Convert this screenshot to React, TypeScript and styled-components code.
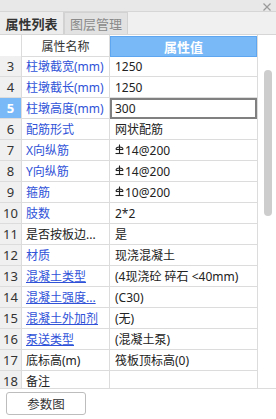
import React from 'react';
import styled, { createGlobalStyle } from 'styled-components';

const GlobalStyle = createGlobalStyle`
	html, body {
		margin: 0;
		padding: 0;
		background: #ffffff;
	}
	body {
		font-family: 'Noto Sans', 'Noto Sans CJK SC', sans-serif;
		font-size: 12px;
		color: #222222;
	}
`;

type Row = {
	no: number;
	name: string;
	value: string;
	link?: boolean;
	plain?: boolean;
	rebar?: boolean;
	selected?: boolean;
};

const rows: Row[] = [
	{ no: 3, name: '柱墩截宽(mm)', value: '1250' },
	{ no: 4, name: '柱墩截长(mm)', value: '1250' },
	{ no: 5, name: '柱墩高度(mm)', value: '300', selected: true },
	{ no: 6, name: '配筋形式', value: '网状配筋' },
	{ no: 7, name: 'X向纵筋', value: '14@200', rebar: true },
	{ no: 8, name: 'Y向纵筋', value: '14@200', rebar: true },
	{ no: 9, name: '箍筋', value: '10@200', rebar: true },
	{ no: 10, name: '肢数', value: '2*2' },
	{ no: 11, name: '是否按板边...', value: '是', plain: true },
	{ no: 12, name: '材质', value: '现浇混凝土' },
	{ no: 13, name: '混凝土类型', value: '(4现浇砼 碎石 <40mm)', link: true },
	{ no: 14, name: '混凝土强度...', value: '(C30)', link: true },
	{ no: 15, name: '混凝土外加剂', value: '(无)', link: true },
	{ no: 16, name: '泵送类型', value: '(混凝土泵)', link: true },
	{ no: 17, name: '底标高(m)', value: '筏板顶标高(0)', plain: true },
	{ no: 18, name: '备注', value: '', plain: true },
];

// steel grade mark shown before rebar specs
const RebarIcon = () => (
	<svg width='9' height='11' viewBox='0 0 9 11' style={{ marginRight: 1, marginBottom: 1 }}>
		<path d='M1 5.5 C1 2.2 8 2.2 8 5.5' fill='none' stroke='#222' strokeWidth='1.1' />
		<line x1='1' y1='5.5' x2='8' y2='5.5' stroke='#222' strokeWidth='1.1' />
		<line x1='4.5' y1='0.5' x2='4.5' y2='9.5' stroke='#222' strokeWidth='1.1' />
		<line x1='0.5' y1='9.5' x2='8.5' y2='9.5' stroke='#222' strokeWidth='1.1' />
	</svg>
);

const CloseIcon = () => (
	<svg width='8' height='8' viewBox='0 0 8 8'>
		<line x1='0.5' y1='0.5' x2='7.5' y2='7.5' stroke='#9a9a9a' strokeWidth='1.3' />
		<line x1='7.5' y1='0.5' x2='0.5' y2='7.5' stroke='#9a9a9a' strokeWidth='1.3' />
	</svg>
);

const App: React.FC = () => {
	return (
		<>
			<GlobalStyle />
			<Panel>
				<TitleStrip>
					<CloseIcon />
				</TitleStrip>
				<TabBar>
					<Tab $active>属性列表</Tab>
					<Tab>图层管理</Tab>
				</TabBar>
				<GridArea>
					<TableSide>
						<HeaderRow>
							<NoHead />
							<NameHead>属性名称</NameHead>
							<ValueHead>属性值</ValueHead>
						</HeaderRow>
						<Body>
							{rows.map((r) => (
								<DataRow key={r.no}>
									<NoCell $selected={r.selected}>{r.no}</NoCell>
									<NameCell $plain={r.plain} $link={r.link}>
										{r.name}
									</NameCell>
									<ValueCell $selected={r.selected}>
										{r.rebar && <RebarIcon />}
										{r.value}
									</ValueCell>
								</DataRow>
							))}
						</Body>
					</TableSide>
					<ScrollTrack>
						<ScrollThumb />
					</ScrollTrack>
				</GridArea>
				<Footer>
					<FooterButton type='button'>参数图</FooterButton>
				</Footer>
			</Panel>
		</>
	);
};

const Panel = styled.div`
	width: 276px;
	height: 419px;
	display: flex;
	flex-direction: column;
	background: #ffffff;
	overflow: hidden;
`;

const TitleStrip = styled.div`
	height: 11px;
	background: #e8e8e8;
	border-bottom: 1px solid #d6d6d6;
	display: flex;
	justify-content: flex-end;
	align-items: center;
	padding-right: 5px;
	padding-top: 2px;
	box-sizing: border-box;
	height: 12px;
`;

const TabBar = styled.div`
	height: 22px;
	display: flex;
	background: #f0f0f0;
	border-bottom: 1px solid #d6d6d6;
`;

const Tab = styled.div<{ $active?: boolean }>`
	width: 64px;
	display: flex;
	align-items: center;
	justify-content: center;
	font-size: 13px;
	font-weight: ${(p) => (p.$active ? 700 : 400)};
	color: ${(p) => (p.$active ? '#333333' : '#8a8a8a')};
	background: ${(p) => (p.$active ? '#ececec' : '#e2e2e2')};
	border-right: 1px solid #d2d2d2;
	border-left: ${(p) => (p.$active ? 'none' : '1px solid #d2d2d2')};
	border-top: ${(p) => (p.$active ? 'none' : '1px solid #d2d2d2')};
	box-sizing: border-box;
`;

const GridArea = styled.div`
	display: flex;
	height: 353px;
	border-bottom: 1px solid #dcdcdc;
`;

const TableSide = styled.div`
	width: 258px;
	display: flex;
	flex-direction: column;
	border-right: 1px solid #dcdcdc;
	box-sizing: border-box;
`;

const HeaderRow = styled.div`
	height: 21px;
	display: grid;
	grid-template-columns: 22px 88px 1fr;
	flex-shrink: 0;
`;

const NoHead = styled.div`
	background: #ffffff;
	border-right: 1px solid #dcdcdc;
	border-bottom: 1px solid #dcdcdc;
`;

const NameHead = styled.div`
	display: flex;
	align-items: center;
	justify-content: center;
	color: #333333;
	border-right: 1px solid #dcdcdc;
	border-bottom: 1px solid #dcdcdc;
`;

const ValueHead = styled.div`
	display: flex;
	align-items: center;
	justify-content: center;
	background: #7ab9f7;
	border: 1px solid #5ea6ef;
	color: #ffffff;
	font-weight: 700;
	font-size: 13px;
	box-sizing: border-box;
	margin-top: 1px;
`;

const Body = styled.div`
	flex: 1;
	overflow: hidden;
`;

const DataRow = styled.div`
	height: 21px;
	display: grid;
	grid-template-columns: 22px 88px 1fr;
	border-bottom: 1px solid #dcdcdc;
	box-sizing: border-box;
`;

const NoCell = styled.div<{ $selected?: boolean }>`
	display: flex;
	align-items: center;
	justify-content: center;
	font-size: 13px;
	background: ${(p) => (p.$selected ? '#7ab9f7' : '#f0f0f0')};
	color: ${(p) => (p.$selected ? '#ffffff' : '#333333')};
	font-weight: ${(p) => (p.$selected ? 700 : 400)};
	border-right: 1px solid #dcdcdc;
`;

const NameCell = styled.div<{ $plain?: boolean; $link?: boolean }>`
	display: flex;
	align-items: center;
	padding-left: 4px;
	white-space: nowrap;
	overflow: hidden;
	color: ${(p) => (p.$plain ? '#222222' : '#2f52d8')};
	text-decoration: ${(p) => (p.$link ? 'underline' : 'none')};
	border-right: 1px solid #dcdcdc;
`;

const ValueCell = styled.div<{ $selected?: boolean }>`
	display: flex;
	align-items: center;
	padding-left: ${(p) => (p.$selected ? '3px' : '5px')};
	white-space: nowrap;
	overflow: hidden;
	color: #222222;
	box-sizing: border-box;
	border: ${(p) => (p.$selected ? '2px solid #808080' : 'none')};
	margin-bottom: ${(p) => (p.$selected ? '-1px' : '0')};
`;

const ScrollTrack = styled.div`
	flex: 1;
	display: flex;
	justify-content: center;
	padding-top: 35px;
	padding-left: 2px;
`;

const ScrollThumb = styled.div`
	width: 8px;
	height: 146px;
	border-radius: 4px;
	background: #cdcdcd;
`;

const Footer = styled.div`
	flex: 1;
	padding: 3px 6px;
`;

const FooterButton = styled.button`
	width: 80px;
	height: 23px;
	background: #ffffff;
	border: 1px solid #bdbdbd;
	border-radius: 3px;
	font-family: 'Noto Sans', 'Noto Sans CJK SC', sans-serif;
	font-size: 12.5px;
	color: #333333;
	padding: 0;
	cursor: pointer;
`;

export default App;
